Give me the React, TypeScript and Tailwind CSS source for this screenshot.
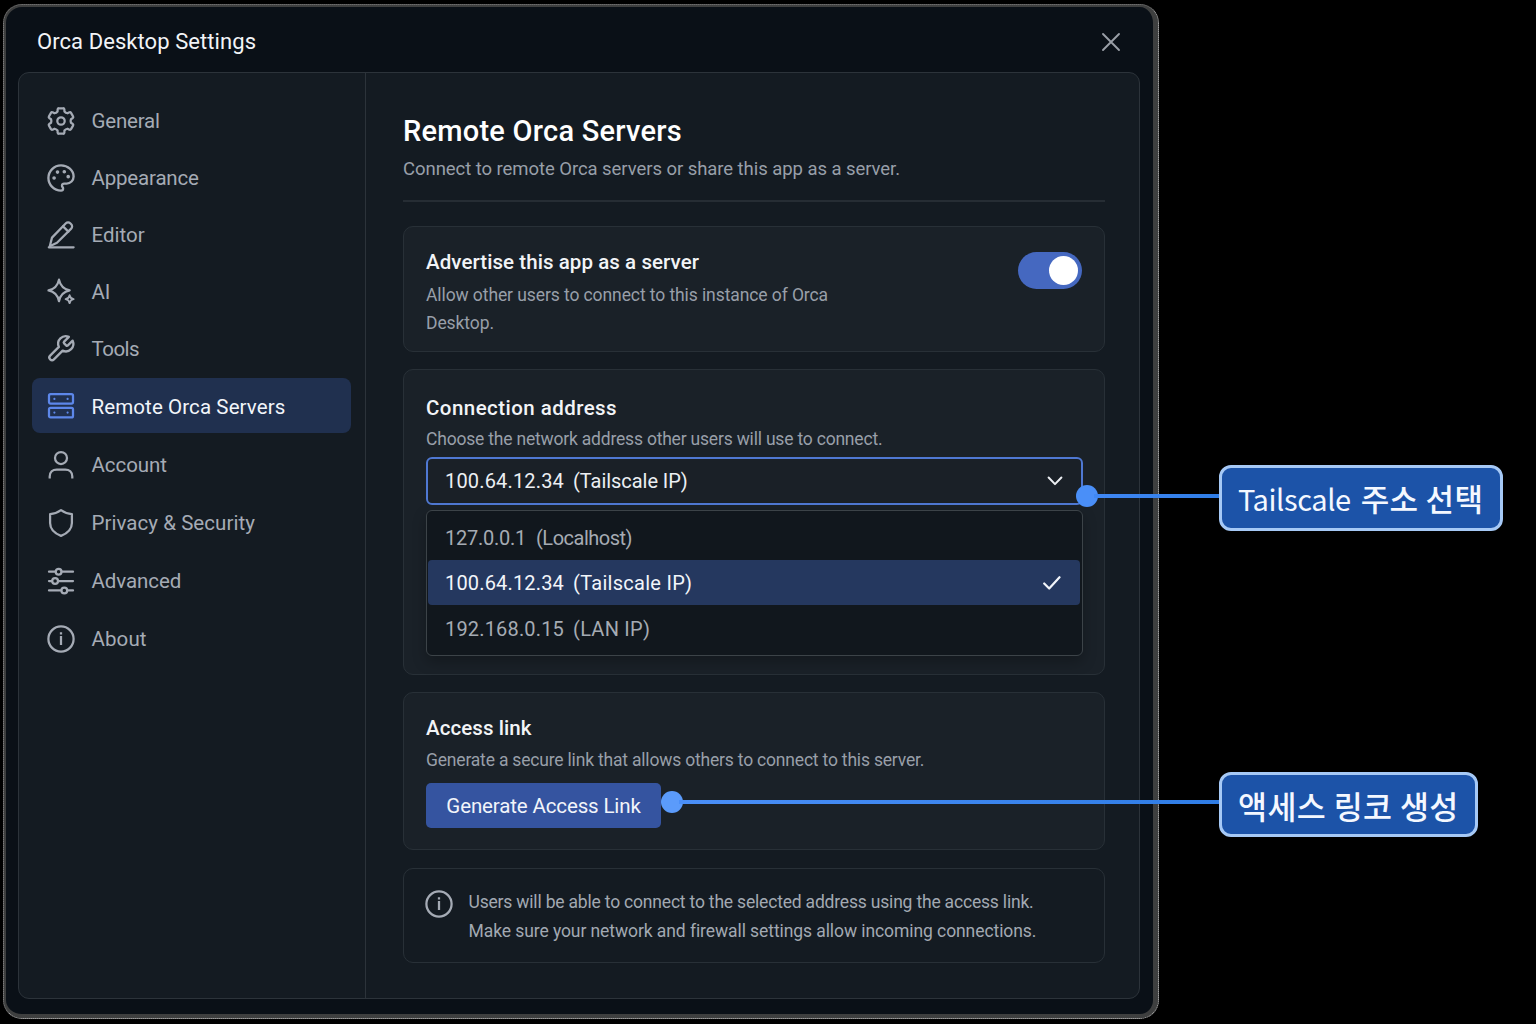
import type { ReactNode } from "react";

type IconProps = { children: ReactNode; className?: string };

function Icon({ children, className = "" }: IconProps) {
  return (
    <svg
      width="28"
      height="28"
      viewBox="0 0 28 28"
      fill="none"
      stroke="currentColor"
      strokeWidth="2.250"
      strokeLinecap="round"
      strokeLinejoin="round"
      className={`shrink-0 overflow-visible ${className}`}
    >
      {children}
    </svg>
  );
}

// Outline of a cog with six wide teeth, centred in the 28px icon box.
const polar = (radius: number, degrees: number) => {
  const a = (degrees * Math.PI) / 180;
  return `${(14 + radius * Math.cos(a)).toFixed(2)} ${(14 + radius * Math.sin(a)).toFixed(2)}`;
};
const cogPath =
  [30, 90, 150, 210, 270, 330]
    .map((a, i) => {
      const start = `${i === 0 ? "M" : "L"}${polar(10.1, a - 20)}`;
      return `${start} L${polar(12.2, a - 16)} Q${polar(13.2, a - 13.5)} ${polar(12.9, a - 9)} L${polar(12.9, a + 9)} Q${polar(13.2, a + 13.5)} ${polar(12.2, a + 16)} L${polar(10.1, a + 20)} Q${polar(9.3, a + 30)} ${polar(10.1, a + 40)}`;
    })
    .join(" ") + "Z";

const GearIcon = () => (
  <Icon>
    <path d={cogPath} />
    <circle cx="14" cy="14" r="3.700" />
  </Icon>
);

const PaletteIcon = () => (
  <Icon>
    <g transform="translate(-1.1 -1.1) scale(1.26)" strokeWidth="1.850">
      <path d="M12 2C6.5 2 2 6.5 2 12s4.5 10 10 10c.926 0 1.648-.746 1.648-1.688 0-.437-.18-.835-.437-1.125-.29-.289-.438-.652-.438-1.125a1.64 1.64 0 0 1 1.668-1.668h1.996c3.051 0 5.555-2.503 5.555-5.554C21.965 6.012 17.461 2 12 2z" />
      <g fill="currentColor" strokeWidth="1.100">
        <circle cx="6.5" cy="12" r=".9" />
        <circle cx="9.2" cy="7.3" r=".9" />
        <circle cx="14.6" cy="7" r=".9" />
        <circle cx="17.7" cy="10.9" r=".9" />
      </g>
    </g>
  </Icon>
);

const PencilIcon = () => (
  <Icon>
    <path d="M2.8 25.2 5 16.6 18.9 2.3a3 3 0 0 1 4.3 0l1 1a3 3 0 0 1 0 4.3L10 21.8Z" />
    <path d="m16 5.4 5.4 5.2M1.8 26.3h24.8" />
  </Icon>
);

const SparkleIcon = () => (
  <Icon>
    <path d="M12 1.6c1.3 6.500 4.300 9.500 10.700 10.800C16.300 13.700 13.300 16.700 12 23.200 10.700 16.700 7.700 13.700 1.500 12.400 7.700 11.100 10.700 8.100 12 1.600Z" />
    <path
      strokeWidth="1.8"
      d="M22.600 17.200c.5 2.500 1.500 3.500 4 4-2.500.5-3.500 1.500-4 4-.5-2.500-1.500-3.500-4-4 2.500-.5 3.500-1.500 4-4Z"
    />
  </Icon>
);

const WrenchIcon = () => (
  <Icon>
    <g transform="translate(-1.4 -1.3) scale(1.26)" strokeWidth="1.850">
      <path d="M14.7 6.3a1 1 0 0 0 0 1.4l1.6 1.6a1 1 0 0 0 1.4 0l3.77-3.77a6 6 0 0 1-7.94 7.94l-6.91 6.91a2.12 2.12 0 0 1-3-3l6.91-6.91a6 6 0 0 1 7.94-7.94l-3.76 3.76z" />
    </g>
  </Icon>
);

const ServerIcon = () => (
  <Icon className="mt-px text-[#5d87ea]">
    <rect x="2" y="2.200" width="24" height="9.400" rx="1.500" />
    <rect x="2" y="15.800" width="24" height="9.600" rx="1.500" />
    <path strokeWidth="2.200" d="M7.400 6.900h.01M20.600 6.900h.01M7.400 20.600h.01M20.600 20.600h.01" />
  </Icon>
);

const UserIcon = () => (
  <Icon>
    <circle cx="14" cy="7" r="6" />
    <path strokeLinecap="butt" d="M2.700 27.400v-2c0-4.200 3-6.800 7-6.800h8.600c4 0 7 2.600 7 6.800v2" />
  </Icon>
);

const ShieldIcon = () => (
  <Icon>
    <path d="M14 1.200C10.800 3.500 7 5 3.100 5.200V14c0 6.800 4.600 10.400 10.900 12.900 6.300-2.500 10.900-6.100 10.900-12.900V5.200C21 5 17.200 3.500 14 1.200Z" />
  </Icon>
);

const SlidersIcon = () => (
  <Icon>
    <path d="M2 4.700h6.500M14.700 4.700H26M2 14h3M11.200 14H26M2 23.400h12.200M20.400 23.400H26" />
    <circle cx="11.600" cy="4.700" r="2.900" />
    <circle cx="8.100" cy="14" r="2.900" />
    <circle cx="17.300" cy="23.400" r="2.900" />
  </Icon>
);

const InfoIcon = ({ className = "" }: { className?: string }) => (
  <Icon className={className}>
    <circle cx="14" cy="14" r="12.600" />
    <path strokeLinecap="butt" d="M14 11v9M14 7.200v2.200" />
  </Icon>
);

const nav = [
  { label: "General", icon: <GearIcon />, box: "", text: "tracking-[-0.2px]" },
  { label: "Appearance", icon: <PaletteIcon />, box: "mt-[2px]", text: "tracking-[-0.18px]" },
  { label: "Editor", icon: <PencilIcon />, box: "mt-[2px]", text: "" },
  { label: "AI", icon: <SparkleIcon />, box: "mt-[2px]", text: "" },
  { label: "Tools", icon: <WrenchIcon />, box: "mt-[2px]", text: "tracking-[-0.5px]" },
  {
    label: "Remote Orca Servers",
    icon: <ServerIcon />,
    box: "mt-[2px] bg-[#20304f] text-[#f2f5fa]",
    text: "tracking-[0.1px] pt-[3px]",
  },
  { label: "Account", icon: <UserIcon />, box: "mt-[4px]", text: "tracking-[-0.05px]" },
  { label: "Privacy & Security", icon: <ShieldIcon />, box: "mt-[3px]", text: "tracking-[0.05px]" },
  { label: "Advanced", icon: <SlidersIcon />, box: "mt-[3px]", text: "tracking-[-0.08px]" },
  { label: "About", icon: <InfoIcon />, box: "mt-[3px]", text: "tracking-[0.1px]" },
];

function Sidebar() {
  return (
    <nav className="w-[347px] shrink-0 border-r border-[#2c333a] pt-[20px] pl-[13px]">
      {nav.map((item) => (
        <div
          key={item.label}
          className={`flex h-[55px] w-[319px] items-center gap-[16.500px] rounded-lg pl-[15px] text-[20.500px] leading-6 text-[#a5abb5] ${item.box}`}
        >
          {item.icon}
          <span className={item.text}>{item.label}</span>
        </div>
      ))}
    </nav>
  );
}

function Select() {
  return (
    <div className="relative mt-[6px] -mr-px">
      <div className="flex h-[48px] items-center justify-between rounded-md border-2 border-[#4f78d2] bg-[#1a2027] pr-[18px] pl-[17px] text-[20px] leading-6 text-[#eceff3]">
        <span className="flex gap-[9px]">
          <span className="tracking-[0.17px]">100.64.12.34</span>
          <span className="tracking-[-0.05px]">(Tailscale IP)</span>
        </span>
        <svg width="16" height="10" viewBox="0 0 16 10" fill="none" stroke="currentColor" strokeWidth="2" strokeLinecap="round" strokeLinejoin="round">
          <path d="m1.600 1.500 6.400 6.600 6.400-6.600" />
        </svg>
      </div>
      <div className="absolute inset-x-0 top-[53px] rounded-md border border-[#3c4348] bg-[#11171d] pt-1 pr-[2px] pb-[4px] pl-px text-[20px] leading-6 text-[#a5abb3] shadow-[0_6px_14px_rgba(0,0,0,0.25)]">
        <div className="flex h-[45px] items-center gap-[10px] pl-[17px]">
          <span className="tracking-[-0.25px]">127.0.0.1</span>
          <span className="tracking-[-0.500px]">(Localhost)</span>
        </div>
        <div className="flex h-[45px] items-center rounded-[4px] bg-[#25385f] pr-[19px] pl-[17px] text-[#f2f5fa]">
          <span className="tracking-[0.17px]">100.64.12.34</span>
          <span className="ml-[9px] flex-1 tracking-[0.28px]">(Tailscale IP)</span>
          <svg width="18" height="14" viewBox="0 0 18 14" fill="none" stroke="currentColor" strokeWidth="2.200" strokeLinecap="round" strokeLinejoin="round">
            <path d="m1.200 7.500 5 5L16.500 1.200" />
          </svg>
        </div>
        <div className="flex h-[46px] items-center gap-[9px] pt-px pl-[17px]">
          <span className="tracking-[0.17px]">192.168.0.15</span>
          <span className="tracking-[0.25px]">(LAN IP)</span>
        </div>
      </div>
    </div>
  );
}

function Main() {
  return (
    <main className="flex-1 pt-[40px] pr-[34px] pl-[37px]">
      <h1 className="text-[29px] leading-9 font-medium tracking-[0.24px] text-white">Remote Orca Servers</h1>
      <p className="mt-[8px] text-[18.500px] leading-6 tracking-[-0.06px] text-[#989fa9]">
        Connect to remote Orca servers or share this app as a server.
      </p>
      <div className="mt-[19px] h-[2px] bg-[#262d34]" />

      <section className="mt-[24px] flex h-[126px] justify-between rounded-[10px] border border-[#283037] bg-[#1a2128] pt-[23px] pr-[22px] pl-[22px]">
        <div>
          <h2 className="text-[20.500px] leading-6 font-medium tracking-[0.07px] text-[#f2f4f7]">Advertise this app as a server</h2>
          <p className="mt-[7px] w-[430px] text-[17.500px] leading-7 tracking-[-0.09px] text-[#989fa9]">
            Allow other users to connect to this instance of Orca
            <br />
            Desktop.
          </p>
        </div>
        <div className="mt-[2px] flex h-[37px] w-[64px] items-center justify-end rounded-full bg-[#4568c0] pr-1">
          <span className="size-[29px] rounded-full bg-white" />
        </div>
      </section>

      <section className="mt-[17px] h-[306px] rounded-[10px] border border-[#283037] bg-[#1a2128] px-[22px] pt-[26px]">
        <h2 className="text-[20.500px] leading-6 font-medium tracking-[0.45px] text-[#f2f4f7]">Connection address</h2>
        <p className="mt-[7px] text-[17.500px] leading-6 tracking-[-0.2px] text-[#989fa9]">
          Choose the network address other users will use to connect.
        </p>
        <Select />
      </section>

      <section className="mt-[17px] h-[158px] rounded-[10px] border border-[#283037] bg-[#1a2128] px-[22px] pt-[23px]">
        <h2 className="text-[20.500px] leading-6 font-medium tracking-[0.07px] text-[#f2f4f7]">Access link</h2>
        <p className="mt-[8px] text-[17.500px] leading-6 tracking-[-0.19px] text-[#989fa9]">
          Generate a secure link that allows others to connect to this server.
        </p>
        <button className="mt-[11px] block h-[45px] w-[235px] rounded-[5px] bg-[#3554a0] text-[20.500px] leading-6 tracking-[-0.14px] text-[#f2f5fa]">
          Generate Access Link
        </button>
      </section>

      <section className="mt-[18px] flex h-[95px] gap-[15.500px] rounded-[10px] border border-[#283037] pt-[19px] pl-[21px]">
        <InfoIcon className="mt-[2px] text-[#a5abb5]" />
        <p className="text-[17.500px] leading-[29px] text-[#a2a9b2]">
          <span className="block tracking-[-0.19px]">
            Users will be able to connect to the selected address using the access link.
          </span>
          <span className="block tracking-[-0.08px]">
            Make sure your network and firewall settings allow incoming connections.
          </span>
        </p>
      </section>
    </main>
  );
}

export default function App() {
  return (
    <div className="relative h-[1024px] w-[1536px] overflow-hidden bg-black pt-1 pl-[3px] font-['Roboto','Noto_Sans_CJK_KR',sans-serif]">
      <div className="h-[1015px] w-[1156px] rounded-[19px] border border-t-[#6a6a6a] border-r-[#b5b5b5] border-b-[#b5b5b5] border-l-[#7a7a7a] border-dotted bg-[#5a5a5a]">
        <div className="h-full rounded-[18px] border-2 border-r-[5px] border-b-[4px] border-[#3e3f3f] bg-[#0a1017] pl-[12px]">
          <header className="flex h-[65px] items-center justify-between pr-[32px] pl-[19px]">
            <span className="pt-[4px] text-[22px] leading-7 tracking-[0.07px] text-[#f2f4f7]">Orca Desktop Settings</span>
            <svg width="20" height="20" viewBox="0 0 20 20" fill="none" stroke="#9a9fa7" strokeWidth="1.900" strokeLinecap="round" className="mt-[4px]">
              <path d="m2 2 16 16M18 2 2 18" />
            </svg>
          </header>
          <div className="flex h-[927px] w-[1122px] rounded-[11px] border border-[#2c333a] bg-[#141b22]">
            <Sidebar />
            <Main />
          </div>
        </div>
      </div>

      {/* Callout: address select */}
      <div className="absolute top-[465px] left-[1076px] flex items-start">
        <span className="mt-[20px] size-[22px] rounded-full bg-[#4a8ff8]" />
        <span className="mt-[29px] -ml-1 h-1 w-[126px] bg-linear-to-r from-[#4088f5] to-[#2f7de6]" />
        <span className="-ml-px flex h-[66px] w-[284px] items-center gap-[10px] rounded-[12px] border-[3px] border-[#a6c9f6] bg-[#1c53a8] pl-[16px] font-['Noto_Sans_CJK_KR',sans-serif] whitespace-nowrap text-[#f4f8ff]">
          <span className="text-[29px] leading-9 tracking-[-0.400px]">Tailscale</span>
          <span className="text-[31px] leading-9 font-medium tracking-[0.3px]">주소 선택</span>
        </span>
      </div>

      {/* Callout: access link */}
      <div className="absolute top-[772px] left-[661px] flex items-start">
        <span className="mt-[19px] size-[22px] rounded-full bg-[#5b9bfb]" />
        <span className="mt-[28px] -ml-1 h-1 w-[541px] bg-linear-to-r from-[#4a8ff8] to-[#2f7de6]" />
        <span className="-ml-px flex h-[65px] w-[259px] items-center rounded-[12px] border-[3px] border-[#a6c9f6] bg-[#1c53a8] pl-[16px] font-['Noto_Sans_CJK_KR',sans-serif] text-[31.500px] leading-9 font-medium tracking-[0.4px] whitespace-nowrap text-[#f4f8ff]">
          액세스 링코 생성
        </span>
      </div>
    </div>
  );
}
